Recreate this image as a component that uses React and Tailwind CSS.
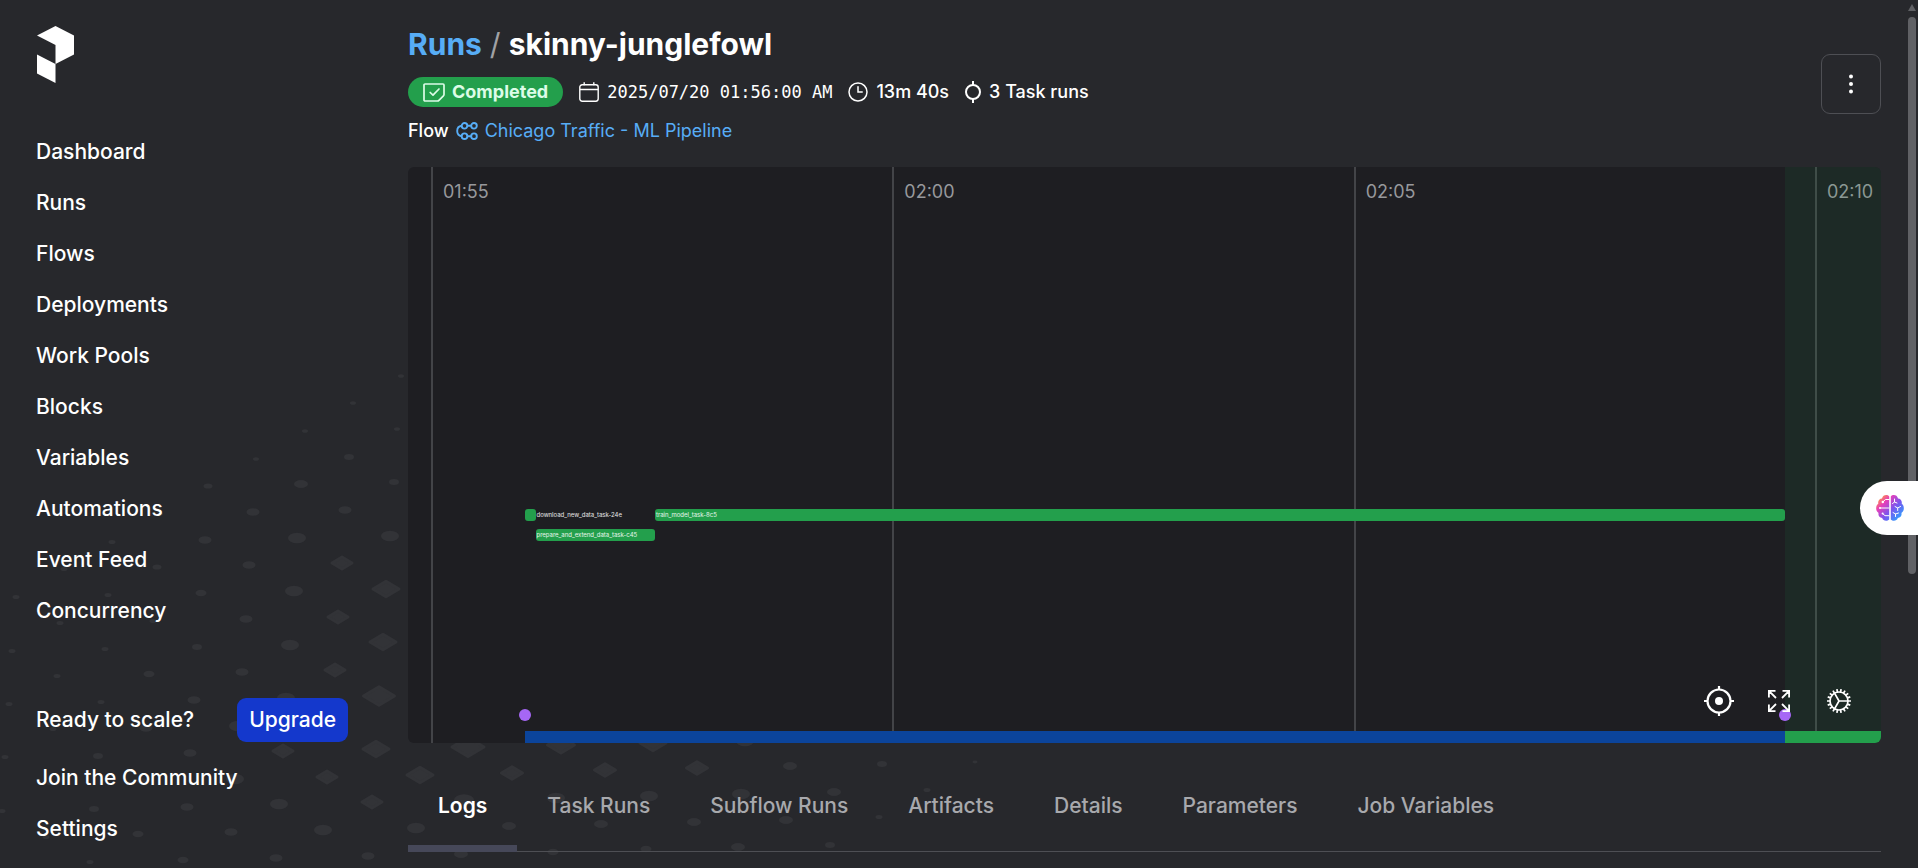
import React from "react";

const NAV = [
  "Dashboard",
  "Runs",
  "Flows",
  "Deployments",
  "Work Pools",
  "Blocks",
  "Variables",
  "Automations",
  "Event Feed",
  "Concurrency",
];

const TABS = ["Logs", "Task Runs", "Subflow Runs", "Artifacts", "Details", "Parameters", "Job Variables"];

// Decorative backdrop: centre x, centre y, width
const SPECKS = [
  [401, 376, 6], [353, 403, 6], [305, 431, 6], [397, 429, 6], [256, 459, 6], [349, 457, 10], [208, 486, 9],
  [301, 484, 14], [394, 482, 10], [160, 514, 6], [253, 512, 13], [345, 510, 13], [112, 542, 7], [205, 540, 13],
  [297, 538, 18], [390, 536, 18], [64, 569, 7], [157, 567, 9], [249, 565, 13], [342, 563, 24], [16, 597, 7],
  [108, 595, 7], [201, 593, 11], [294, 591, 18], [386, 589, 30], [60, 623, 7], [153, 621, 7], [246, 619, 13],
  [338, 617, 24], [383, 642, 30], [12, 651, 7], [105, 649, 7], [197, 647, 10], [290, 645, 18], [57, 676, 7],
  [149, 674, 11], [242, 672, 13], [335, 670, 24], [379, 696, 35], [9, 704, 7], [101, 702, 7], [194, 700, 13],
  [286, 698, 18], [53, 729, 7], [146, 728, 13], [238, 726, 18], [5, 757, 7], [98, 756, 10], [190, 753, 13],
  [283, 751, 24], [376, 749, 30], [50, 783, 7], [142, 781, 10], [235, 779, 18], [327, 777, 24], [420, 775, 30],
  [2, 811, 7], [94, 809, 10], [187, 807, 13], [279, 804, 18], [372, 802, 24], [46, 837, 7], [138, 834, 11],
  [231, 832, 13], [323, 830, 18], [416, 828, 18], [90, 862, 7], [183, 860, 11], [276, 858, 13], [368, 856, 13],
  [468, 747, 36], [561, 745, 31], [653, 743, 30], [745, 741, 18], [512, 773, 25], [605, 770, 25], [697, 768, 25],
  [790, 766, 14], [882, 764, 10], [975, 762, 5], [464, 800, 20], [556, 798, 18], [649, 796, 18], [741, 794, 18],
  [834, 792, 14], [927, 790, 7], [509, 826, 14], [601, 824, 14], [694, 822, 14], [786, 820, 14], [879, 817, 7],
  [461, 854, 14], [553, 852, 11], [646, 849, 11], [738, 847, 14], [830, 845, 10],
];

// The visible window of the timeline, in minutes relative to 01:55
const VIEW_START = -0.26;
const VIEW_SPAN = 15.965;
const at = (minute) => `${((minute - VIEW_START) / VIEW_SPAN) * 100}%`;
const span = (from, to) => `${((to - from) / VIEW_SPAN) * 100}%`;

const RUN_START = 1.008;
const RUN_END = 14.664;
const TICKS = [
  { minute: 0, label: "01:55" },
  { minute: 5, label: "02:00" },
  { minute: 10, label: "02:05" },
  { minute: 15, label: "02:10" },
];

function Backdrop() {
  return (
    <svg className="pointer-events-none absolute left-0 top-0 h-[868px] w-[1000px]" viewBox="0 0 1000 868" fill="#323337" stroke="#323337" aria-hidden="true">
      {SPECKS.map(([x, y, w]) =>
        w >= 24 ? (
          <path
            key={`${x}-${y}`}
            strokeWidth="3"
            strokeLinejoin="round"
            d={`M${x - w / 2 + 2} ${y}L${x} ${y - w * 0.29 + 1}L${x + w / 2 - 2} ${y}L${x} ${y + w * 0.29 - 1}Z`}
          />
        ) : (
          <ellipse key={`${x}-${y}`} cx={x} cy={y} rx={w / 2} ry={w * 0.29} stroke="none" />
        )
      )}
    </svg>
  );
}

function Logo() {
  return (
    <svg className="h-[57px] w-[37px]" viewBox="0 0 37 57" fill="#fff" aria-hidden="true">
      <path d="M0 9.6 18.5 0 37 9.6V28.5L18.5 38V19Z" />
      <path d="M0 28.5 18.5 38V57L0 47.5Z" />
    </svg>
  );
}

function CompletedIcon() {
  return (
    <svg className="h-[19px] w-[22px]" viewBox="0 0 22 19" fill="none" stroke="currentColor" strokeWidth="1.7" strokeLinejoin="round" strokeLinecap="round" aria-hidden="true">
      <path d="M2 1h18a1 1 0 0 1 1 1v9.500a2 2 0 0 1-.6 1.400l-4.500 4.500a2 2 0 0 1-1.400.6H2a1 1 0 0 1-1-1V2a1 1 0 0 1 1-1Z" />
      <path d="m7.200 9.500 2.800 2.700 6-6.200" />
    </svg>
  );
}

function CalendarIcon() {
  return (
    <svg className="h-5 w-5" viewBox="0 0 20 20" fill="none" stroke="currentColor" strokeWidth="1.400" aria-hidden="true">
      <rect x=".8" y="2.800" width="18.400" height="16.400" rx="2.400" />
      <path d="M1 7.500h18M5.200.2v3M14.800.2v3" />
    </svg>
  );
}

function ClockIcon() {
  return (
    <svg className="h-5 w-5" viewBox="0 0 20 20" fill="none" stroke="currentColor" strokeWidth="1.500" strokeLinecap="round" aria-hidden="true">
      <circle cx="10" cy="10" r="9" />
      <path d="M10 4.800V10h4.200" />
    </svg>
  );
}

function TaskIcon() {
  return (
    <svg className="h-[22px] w-4" viewBox="0 0 16 22" fill="none" stroke="currentColor" strokeWidth="2" aria-hidden="true">
      <circle cx="8" cy="11" r="7" />
      <path d="M8 0v4M8 18v4" />
    </svg>
  );
}

function FlowIcon() {
  return (
    <svg className="h-[18px] w-[22px]" viewBox="0 0 22 18" fill="none" stroke="currentColor" strokeWidth="1.900" aria-hidden="true">
      <circle cx="8.500" cy="3.800" r="2.800" />
      <circle cx="18" cy="3.800" r="2.800" />
      <circle cx="8.500" cy="14.200" r="2.800" />
      <circle cx="18" cy="14.200" r="2.800" />
      <path d="M11.300 3.800h3.900M11.300 14.200h3.900M5.700 3.800C2.500 4.200 1.200 6.500 1.200 9s1.300 4.800 4.500 5.200" />
    </svg>
  );
}

function TargetIcon() {
  return (
    <svg className="h-[30px] w-[30px]" viewBox="0 0 30 30" fill="none" stroke="#fff" strokeWidth="2.200" aria-hidden="true">
      <circle cx="15" cy="15" r="11.500" />
      <circle cx="15" cy="15" r="4" fill="#fff" stroke="none" />
      <path d="M15 0v4M15 26v4M0 15h4M26 15h4" />
    </svg>
  );
}

function ExpandIcon() {
  return (
    <svg className="h-[24px] w-[24px]" viewBox="0 0 24 24" fill="none" stroke="#fff" strokeWidth="1.800" aria-hidden="true">
      <path d="M8.500 1.900H1.900v6.600M1.900 1.900 9 9M15.500 1.900h6.600v6.600M22.100 1.900 15 9M8.500 22.100H1.900v-6.600M1.900 22.100 9 15M15.500 22.100h6.600v-6.600M22.100 22.100 15 15" />
    </svg>
  );
}

function GearIcon() {
  const teeth = Array.from({ length: 18 }, (_, i) => i * 20);
  return (
    <svg className="h-6 w-6" viewBox="0 0 24 24" fill="none" stroke="#fff" strokeWidth="1.700" aria-hidden="true">
      <circle cx="12" cy="12" r="9" />
      {teeth.map((a) => (
        <path key={a} d="M21 12h3" transform={`rotate(${a} 12 12)`} />
      ))}
      <path d="M12 12h9M12 12 7.500 4.200M12 12l-4.500 7.800" />
    </svg>
  );
}

function BrainIcon() {
  return (
    <svg className="h-7 w-7" viewBox="0 0 28 28" aria-hidden="true">
      <defs>
        <linearGradient id="brain" x1="3" y1="3" x2="25" y2="25" gradientUnits="userSpaceOnUse">
          <stop offset="0" stopColor="#ff9a3d" />
          <stop offset=".25" stopColor="#e83fb8" />
          <stop offset=".58" stopColor="#7a55ee" />
          <stop offset="1" stopColor="#2ba6ff" />
        </linearGradient>
      </defs>
      <path
        fill="url(#brain)"
        d="M13.200 2.500V25.500C11 27.700 7 27 6.200 24 3.500 24 1.800 21.300 2.600 18.900-.6 17 -.6 11.500 2.300 9.800 1.600 7 3.500 4.600 6 4.500 6.800.8 11.300.1 13.200 2.500ZM14.800 2.500C16.700.1 21.200.8 22 4.500c2.500.1 4.400 2.500 3.700 5.300 2.900 1.700 2.900 7.200-.3 9.100.8 2.400-.9 5.100-3.600 5.100-.8 3-4.800 3.700-7 1.500Z"
      />
      <g fill="none" stroke="#fff" strokeWidth="1" strokeLinecap="round">
        <path d="M13 5.500H9.500L7 7.800M4 14H13M6.500 19.500l2.500 2.200h4M18.500 5v3l-2 1.500M18.500 8l2.500 1M19 12.500l2.700 1.500 2.800-1.500M21.700 14v2.500M17 18.500l2.500 1.500 3-1M19.500 20v2.500" />
      </g>
      <circle cx="6.800" cy="8" r="1.200" fill="#fff" />
      <circle cx="4" cy="14" r="1" fill="#fff" />
      <circle cx="6.600" cy="19.500" r="1" fill="#fff" />
    </svg>
  );
}

function Sidebar() {
  return (
    <aside className="sticky top-0 flex h-screen w-96 shrink-0 flex-col px-9 pb-[14px] pt-[26px] text-[21px] font-medium leading-[51px]">
      <a href="#home" aria-label="Home" className="mb-[43px] block w-[37px] pl-px">
        <Logo />
      </a>
      <nav className="flex flex-col" aria-label="Main">
        {NAV.map((item) => (
          <a key={item} href={`#${item.toLowerCase().replace(" ", "-")}`}>
            {item}
          </a>
        ))}
      </nav>
      <div className="mt-auto flex flex-col">
        <div className="mb-[7px] flex items-center justify-between">
          <span>Ready to scale?</span>
          <button type="button" className="h-11 rounded-[9px] bg-[#1438cc] px-3 leading-7">
            Upgrade
          </button>
        </div>
        <a href="#community">Join the Community</a>
        <a href="#settings">Settings</a>
      </div>
    </aside>
  );
}

function Header() {
  return (
    <header className="flex items-center justify-between">
      <div className="flex flex-col gap-3">
        <h1 className="flex items-center gap-2 text-[30px] font-bold leading-[41px]">
          <a href="#runs" className="text-[#57adf6]">
            Runs
          </a>
          <span className="font-normal text-[#a0a1a5]">/</span>
          <span>skinny-junglefowl</span>
        </h1>
        <div className="flex items-center gap-4 text-[18px] font-medium leading-[30px]">
          <span className="flex items-center gap-[7px] rounded-full bg-[#239f4c] px-[15px] font-bold text-[#dcfce7]">
            <CompletedIcon />
            Completed
          </span>
          <span className="flex items-center gap-2">
            <CalendarIcon />
            <span className="font-['DejaVu_Sans_Mono',monospace] text-[17px] font-normal">2025/07/20 01:56:00 AM</span>
          </span>
          <span className="flex items-center gap-2">
            <ClockIcon />
            13m 40s
          </span>
          <span className="flex items-center gap-2">
            <TaskIcon />3 Task runs
          </span>
        </div>
        <div className="flex items-center gap-[7px] text-[18px] leading-6">
          <span className="font-medium">Flow</span>
          <a href="#flow" className="flex items-center gap-[7px] text-[#57adf6]">
            <FlowIcon />
            Chicago Traffic - ML Pipeline
          </a>
        </div>
      </div>
      <button type="button" aria-label="More actions" className="flex h-[60px] w-[60px] items-center justify-center rounded-[9px] border border-[#4e4f54]">
        <svg className="h-5 w-1" viewBox="0 0 4 20" fill="#fff" aria-hidden="true">
          <circle cx="2" cy="2.500" r="2" />
          <circle cx="2" cy="10" r="2" />
          <circle cx="2" cy="17.500" r="2" />
        </svg>
      </button>
    </header>
  );
}

function Timeline() {
  return (
    <section aria-label="Run timeline" className="relative mt-6 h-[576px] overflow-hidden rounded-md bg-[#1e1e22]">
      {TICKS.map(({ minute, label }) => (
        <div key={label} className="absolute inset-y-0 -ml-px border-l-2 border-[#434448] pl-[10px] pt-[13px] text-[18px] leading-6 text-[#97989c]" style={{ left: at(minute) }}>
          {label}
        </div>
      ))}
      <div className="absolute inset-y-0 right-0 bg-[#22a04c]/10" style={{ left: at(RUN_END) }} />

      <div className="absolute top-[342px] h-3 rounded-[3px] bg-[#239f4c]" style={{ left: at(RUN_START), width: span(RUN_START, 1.122) }} />
      <div className="absolute top-[342px] pl-px text-[6px] leading-3 text-white/90" style={{ left: at(1.122) }}>
        download_new_data_task-24e
      </div>
      <div className="absolute top-[362px] h-3 rounded-[3px] bg-[#239f4c] pl-px text-[6px] leading-3 text-white/90" style={{ left: at(1.122), width: span(1.122, 2.417) }}>
        prepare_and_extend_data_task-c45
      </div>
      <div className="absolute top-[342px] h-3 rounded-[3px] bg-[#239f4c] pl-px text-[6px] leading-3 text-white/90" style={{ left: at(2.417), width: span(2.417, RUN_END) }}>
        train_model_task-8c5
      </div>

      {[RUN_START, RUN_END].map((minute) => (
        <div key={minute} className="absolute bottom-[22px] -ml-[6px] h-3 w-3 rounded-full bg-[#a667f5]" style={{ left: at(minute) }} />
      ))}
      <div className="absolute bottom-0 h-3 bg-[#0b449b]" style={{ left: at(RUN_START), width: span(RUN_START, RUN_END) }} />
      <div className="absolute bottom-0 right-0 h-3 bg-[#239f4c]" style={{ left: at(RUN_END) }} />

      <div className="absolute bottom-3 right-3 flex">
        <button type="button" aria-label="Center" className="flex h-[60px] w-[60px] items-center justify-center">
          <TargetIcon />
        </button>
        <button type="button" aria-label="Fullscreen" className="flex h-[60px] w-[60px] items-center justify-center">
          <ExpandIcon />
        </button>
        <button type="button" aria-label="Timeline settings" className="flex h-[60px] w-[60px] items-center justify-center">
          <GearIcon />
        </button>
      </div>
    </section>
  );
}

function Tabs() {
  return (
    <div role="tablist" className="mt-[18px] flex border-b border-[#4e4f54] text-[21px] font-medium text-[#a8a9ad]">
      {TABS.map((tab, i) => (
        <button
          key={tab}
          type="button"
          role="tab"
          aria-selected={i === 0}
          className={
            i === 0
              ? "-mb-px h-[91px] border-b-[7px] border-[#464859] px-[30px] pt-[5px] font-semibold text-white"
              : "-mb-px h-[91px] border-b-[7px] border-transparent px-[30px] pt-[5px]"
          }
        >
          {tab}
        </button>
      ))}
    </div>
  );
}

export default function App() {
  return (
    <div className="relative flex min-h-screen overflow-hidden bg-[#27282c] font-['Inter',sans-serif] text-white">
      <Backdrop />
      <Sidebar />
      <main className="relative min-w-0 flex-1 px-6 pt-6">
        <Header />
        <Timeline />
        <Tabs />
      </main>
      <div className="flex w-[13px] shrink-0 flex-col pl-[3px] pt-1" aria-hidden="true">
        <svg className="h-[7px] w-2" viewBox="0 0 8 7" fill="#606165">
          <path d="M4 0 8 7H0Z" />
        </svg>
        <div className="mt-[6px] h-[557px] w-2 rounded-full bg-[#606165]" />
      </div>
      <button type="button" aria-label="Open assistant" className="absolute right-0 top-[481px] flex h-[54px] w-[58px] items-center rounded-l-full bg-white pl-4">
        <BrainIcon />
      </button>
    </div>
  );
}
